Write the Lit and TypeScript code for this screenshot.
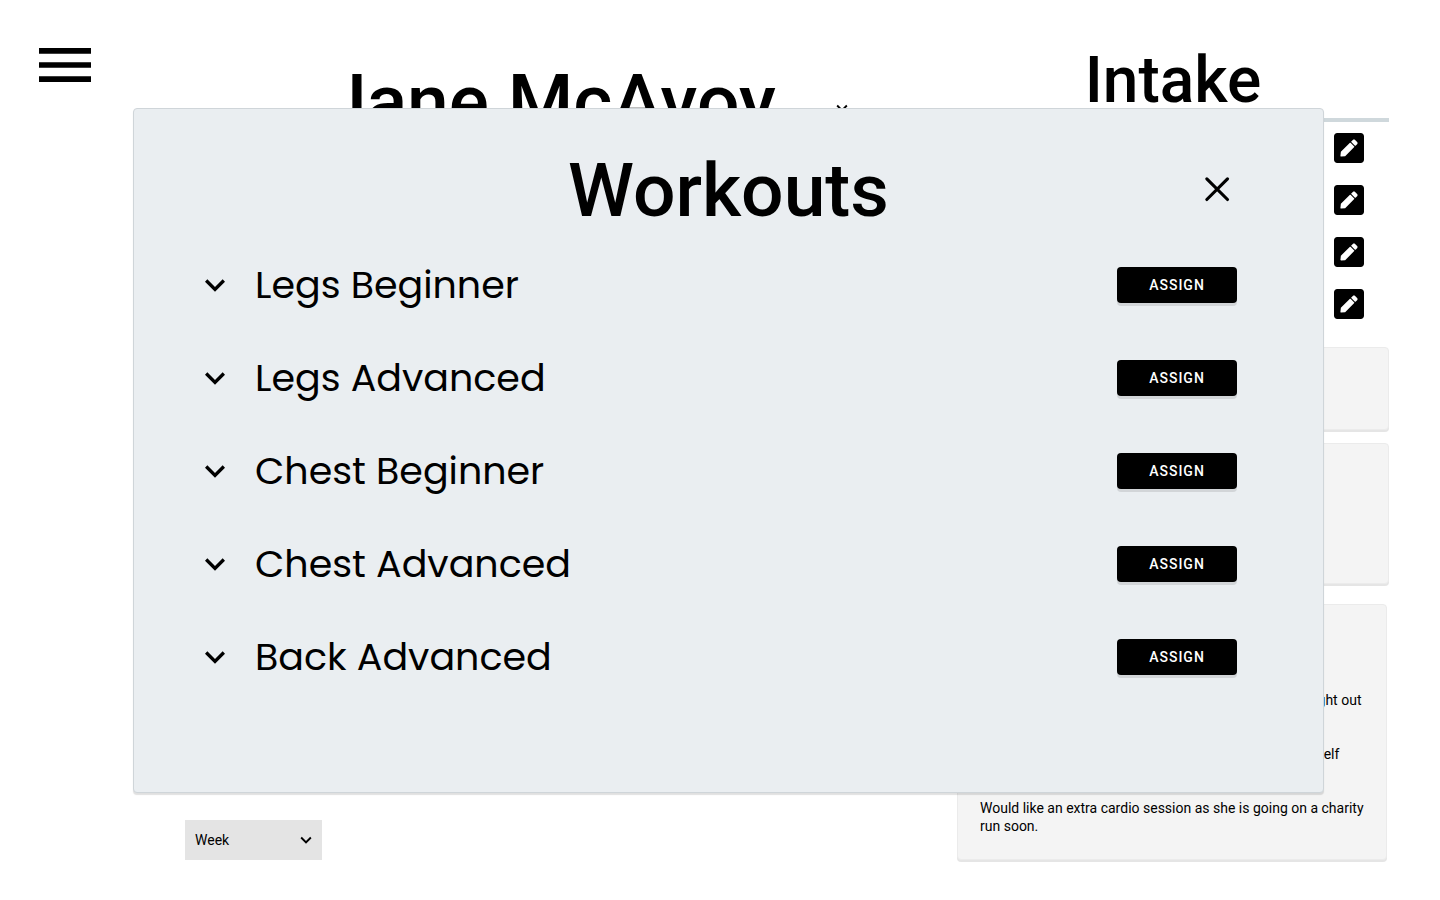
import { LitElement, html, css } from "lit";
import { customElement, state } from "lit/decorators.js";

const chevron = html`<svg class="chevron" viewBox="0 0 24 24" aria-hidden="true">
  <path d="M7.41 8.59 12 13.17l4.59-4.58L18 10l-6 6-6-6z" />
</svg>`;

const penSquare = html`<svg class="pen" viewBox="0 32 448 448" aria-hidden="true">
  <path
    d="M400 480H48c-26.5 0-48-21.5-48-48V80c0-26.5 21.5-48 48-48h352c26.5 0 48 21.5 48 48v352c0 26.5-21.5 48-48 48zM238.1 177.9L102.4 313.6l-6.3 57.1c-.8 7.6 5.6 14.1 13.3 13.3l57.1-6.3L302.2 242c2.3-2.3 2.3-6.1 0-8.5L246.7 178c-2.5-2.4-6.3-2.4-8.6-.1zM345 165.1L314.9 135c-9.4-9.4-24.6-9.4-33.9 0l-23.1 23.1c-2.3 2.3-2.3 6.1 0 8.5l55.5 55.5c2.3 2.3 6.1 2.3 8.5 0L345 199c9.3-9.3 9.3-24.6 0-33.9z"
  />
</svg>`;

const reset = css`
  * {
    box-sizing: border-box;
  }
  h1,
  h2,
  p,
  ul {
    margin: 0;
    padding: 0;
    list-style: none;
  }
  button {
    border: 0;
    padding: 0;
    background: none;
    color: inherit;
    font: inherit;
    cursor: pointer;
  }
  svg {
    display: block;
    fill: currentColor;
  }
`;

@customElement("workout-dialog")
export class WorkoutDialog extends LitElement {
  @state() workouts = [
    "Legs Beginner",
    "Legs Advanced",
    "Chest Beginner",
    "Chest Advanced",
    "Back Advanced",
  ];

  static styles = [
    reset,
    css`
      :host {
        display: block;
      }
      .dialog {
        padding: 33px 0 89px;
        background: #eaeef1;
        border: 1px solid #cfd5d9;
        border-radius: 4px;
        box-shadow: 0 2px 1px rgba(0, 0, 0, 0.12);
      }
      .head {
        display: grid;
        grid-template-columns: 1fr auto 1fr;
        align-items: center;
        padding: 0 86px;
      }
      .title {
        grid-column: 2;
        font-size: 75px;
        line-height: 96px;
        font-weight: 500;
      }
      .close {
        justify-self: end;
      }
      .close svg {
        width: 40px;
        height: 40px;
      }
      .row {
        display: flex;
        align-items: center;
        gap: 20px;
        height: 93px;
        padding: 0 86px 0 61px;
      }
      .chevron {
        width: 40px;
        height: 40px;
      }
      .name {
        flex: 1;
        font-family: Poppins, Inter, sans-serif;
        font-size: 38px;
        line-height: 48px;
      }
      .assign {
        width: 120px;
        height: 36px;
        border-radius: 4px;
        background: #000;
        color: #fff;
        font-size: 14px;
        font-weight: 500;
        letter-spacing: 1px;
        box-shadow: 0 3px 0 rgba(0, 0, 0, 0.1);
      }
    `,
  ];

  render() {
    return html`<section class="dialog" role="dialog" aria-labelledby="title">
      <header class="head">
        <h2 class="title" id="title">Workouts</h2>
        <button class="close" aria-label="Close">
          <svg viewBox="0 0 24 24" aria-hidden="true">
            <path
              d="M5.9 5.3l12.4 12.4M18.3 5.3L5.9 17.7"
              stroke="currentColor"
              stroke-width="1.9"
              stroke-linecap="round"
            />
          </svg>
        </button>
      </header>
      <ul>
        ${this.workouts.map(
          (name) => html`<li class="row">
            <button aria-label="Expand ${name}">${chevron}</button>
            <span class="name">${name}</span>
            <button class="assign">ASSIGN</button>
          </li>`
        )}
      </ul>
    </section>`;
  }
}

@customElement("app-root")
export class AppRoot extends LitElement {
  static styles = [
    reset,
    css`
      :host {
        display: block;
        position: relative;
        min-height: 100vh;
        background: #fff;
        color: #000;
        font-family: Roboto, sans-serif;
      }
      .page {
        display: grid;
        grid-template-columns: 146px minmax(0, 1fr) 432px;
        padding: 44px 51px 38px 39px;
      }
      .menu {
        align-self: start;
        justify-self: start;
        padding-top: 4px;
      }
      .menu svg {
        width: 52px;
        height: 34px;
      }
      .main {
        display: flex;
        flex-direction: column;
        justify-content: space-between;
        align-items: start;
      }
      .client {
        display: flex;
        align-items: center;
        gap: 55px;
        padding: 12px 0 0 140px;
      }
      .client button {
        padding-top: 14px;
      }
      .client-name {
        font-size: 75px;
        line-height: 90px;
        font-weight: 500;
        white-space: nowrap;
      }
      .chevron {
        width: 22px;
        height: 22px;
      }
      .period {
        display: grid;
        align-items: center;
        width: 137px;
        height: 40px;
        background: #e4e4e4;
      }
      .period select,
      .period .chevron {
        grid-area: 1 / 1;
      }
      .period select {
        appearance: none;
        width: 100%;
        height: 100%;
        padding: 0 10px;
        border: 0;
        border-radius: 0;
        background: transparent;
        color: #000;
        font: 14px Roboto, sans-serif;
      }
      .period .chevron {
        justify-self: end;
        margin-right: 5px;
        pointer-events: none;
      }
      .intake-title {
        border-bottom: 4px solid #cfd8dc;
        font-size: 64px;
        line-height: 74px;
        font-weight: 500;
        text-align: center;
      }
      .entries {
        padding-right: 25px;
        margin-bottom: 17px;
      }
      .entry {
        display: flex;
        justify-content: end;
        align-items: center;
        height: 52px;
      }
      .pen {
        width: 30px;
        height: 30px;
      }
      .card {
        background: #f4f4f4;
        border: 1px solid #ebebeb;
        border-radius: 4px;
        box-shadow: 0 2px 0 rgba(0, 0, 0, 0.1);
      }
      .summary {
        min-height: 83px;
        margin-bottom: 13px;
      }
      .goals {
        min-height: 141px;
        margin-bottom: 20px;
      }
      .notes {
        display: grid;
        gap: 18px;
        margin-right: 2px;
        padding: 86px 18px 24px 22px;
        font-size: 14px;
        line-height: 18px;
      }
      .dialog {
        position: absolute;
        top: 108px;
        left: 133px;
        right: 116px;
      }
    `,
  ];

  render() {
    return html`
      <div class="page">
        <button class="menu" aria-label="Menu">
          <svg viewBox="3 6 18 12" preserveAspectRatio="none" aria-hidden="true">
            <path d="M3 18h18v-2H3v2zm0-5h18v-2H3v2zm0-7v2h18V6H3z" />
          </svg>
        </button>
        <main class="main">
          <header class="client">
            <h1 class="client-name">Jane McAvoy</h1>
            <button aria-label="Choose client">${chevron}</button>
          </header>
          <label class="period">
            <select aria-label="Period">
              <option>Week</option>
              <option>Month</option>
            </select>
            ${chevron}
          </label>
        </main>
        <aside>
          <h2 class="intake-title">Intake</h2>
          <ul class="entries">
            ${["calories", "protein", "carbohydrates", "fat"].map(
              (name) => html`<li class="entry">
                <button aria-label="Edit ${name}">${penSquare}</button>
              </li>`
            )}
          </ul>
          <section class="card summary"></section>
          <section class="card goals"></section>
          <section class="card notes">
            <p>Enjoys all long sessions and says they have really brought out<br />her best.</p>
            <p>Has been a bit tired this week reminded her to give herself<br />a rest.</p>
            <p>Would like an extra cardio session as she is going on a charity run soon.</p>
          </section>
        </aside>
      </div>
      <workout-dialog class="dialog"></workout-dialog>
    `;
  }
}
